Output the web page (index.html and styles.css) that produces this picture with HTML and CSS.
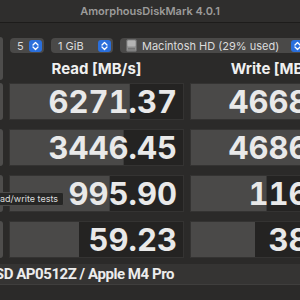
FILE: index.html
```html
<!DOCTYPE html>
<html lang="en">
<head>
    <meta charset="UTF-8">
    <meta name="viewport" content="width=device-width, initial-scale=1.0">
    <title>AmorphousDiskMark</title>
    <link rel="stylesheet" href="styles.css">
</head>
<body>
    <div class="window">
        <div class="titlebar">AmorphousDiskMark 4.0.1</div>

        <div class="content">
            <div class="top">
                <div class="side-btn all"></div>
                <div class="toolbar">
                    <div class="popup popup-count">
                        <span class="popup-label">5</span>
                        <span class="stepper"><svg viewBox="0 0 13 12"><path d="M4 5l2.5-2.5L9 5M4 7l2.5 2.5L9 7" fill="none" stroke="#fff" stroke-width="1.3" stroke-linecap="round" stroke-linejoin="round"/></svg></span>
                    </div>
                    <div class="popup popup-size">
                        <span class="popup-label">1 GiB</span>
                        <span class="stepper"><svg viewBox="0 0 13 12"><path d="M4 5l2.5-2.5L9 5M4 7l2.5 2.5L9 7" fill="none" stroke="#fff" stroke-width="1.3" stroke-linecap="round" stroke-linejoin="round"/></svg></span>
                    </div>
                    <div class="popup popup-disk">
                        <svg class="disk-icon" viewBox="0 0 11 13">
                            <rect x="0.5" y="0.5" width="10" height="12" rx="1.5" fill="#8e8e8e" stroke="#6a6a6a"/>
                            <rect x="1.5" y="1.5" width="8" height="6" rx="1" fill="#b4b4b4"/>
                            <path d="M2 9.5h7M2 11h7" stroke="#6f6f6f" stroke-width="0.8"/>
                        </svg>
                        <span class="popup-label">Macintosh HD (29% used)</span>
                        <span class="stepper"><svg viewBox="0 0 13 12"><path d="M4 5l2.5-2.5L9 5M4 7l2.5 2.5L9 7" fill="none" stroke="#fff" stroke-width="1.3" stroke-linecap="round" stroke-linejoin="round"/></svg></span>
                    </div>
                </div>
                <div class="head">Read [MB/s]</div>
                <div class="head">Write [MB/s]</div>
            </div>

            <div class="rows">
                <div class="side-btn"></div>
                <div class="cell" style="--w: 69%">6271.37</div>
                <div class="cell" style="--w: 67%">4668.52</div>

                <div class="side-btn"></div>
                <div class="cell" style="--w: 65.5%">3446.45</div>
                <div class="cell" style="--w: 67%">4686.18</div>

                <div class="side-btn"></div>
                <div class="cell" style="--w: 57.5%">995.90</div>
                <div class="cell" style="--w: 44%">116.42</div>

                <div class="side-btn"></div>
                <div class="cell" style="--w: 40%">59.23</div>
                <div class="cell" style="--w: 37.4%">38.76</div>
            </div>

            <div class="footer">APPLE SSD AP0512Z / Apple M4 Pro</div>

            <div class="tooltip">Random read/write tests</div>
        </div>
    </div>
</body>
</html>
```

FILE: styles.css
```css
body {
    margin: 0;
    padding: 0;
    width: 300px;
    height: 300px;
    overflow: hidden;
    background-color: #2a2928;
    font-family: Inter, "Liberation Sans", sans-serif;
    color: #e6e6e6;
}

.window {
    width: 300px;
    height: 300px;
    overflow: hidden;
    background-color: #2b2a29;
}

.titlebar {
    height: 22px;
    line-height: 23px;
    text-align: center;
    font-size: 11px;
    font-weight: 600;
    color: #9c9b9a;
    background-color: #2f2e2d;
    border-bottom: 1px solid #1d1c1b;
}

.content {
    position: relative;
    margin-left: -70px;
    width: 440px;
    padding-top: 14px;
}

.top,
.rows {
    display: grid;
    grid-template-columns: 63px 175px 174px;
    column-gap: 6px;
    padding-left: 10px;
}

.top {
    grid-template-rows: 16px 30px;
}

.rows {
    grid-auto-rows: 37px;
    row-gap: 9px;
}

.side-btn {
    background-color: #4e4d4c;
    border-radius: 3px;
}

.side-btn.all {
    grid-row: 1 / 3;
    margin-bottom: 3px;
}

.toolbar {
    grid-column: 2 / 4;
    display: flex;
    gap: 7px;
    padding: 1px 0 0 1px;
}

.popup {
    height: 15px;
    display: flex;
    align-items: center;
    background-color: #4a4948;
    border-radius: 4px;
    font-size: 11px;
    color: #dcdcdc;
    padding-left: 7px;
    padding-right: 2px;
    box-sizing: border-box;
}

.popup-label {
    flex: 1;
    white-space: nowrap;
}

.popup-count {
    width: 34px;
}

.popup-size {
    width: 62px;
}

.popup-disk {
    width: 186px;
    padding-left: 6px;
}

.disk-icon {
    width: 11px;
    height: 13px;
    margin-right: 5px;
}

.stepper {
    width: 13px;
    height: 12px;
    border-radius: 3px;
    background-color: #2a6fdc;
    display: flex;
}

.stepper svg {
    width: 13px;
    height: 12px;
}

.head {
    grid-row: 2;
    align-self: center;
    text-align: center;
    font-size: 15px;
    font-weight: 700;
    color: #f0f0f0;
}

.cell {
    background-color: #242322;
    background-image: linear-gradient(#4a4948, #4a4948);
    background-repeat: no-repeat;
    background-size: var(--w) 100%;
    box-shadow: inset 0 0 0 1px #343332;
    text-align: right;
    padding-right: 7px;
    font-size: 31px;
    font-weight: 700;
    font-variant-numeric: tabular-nums;
    line-height: 38px;
    color: #e9e9e9;
    white-space: nowrap;
}

.footer {
    margin-top: 6px;
    height: 20px;
    line-height: 20px;
    background-color: #353433;
    border-bottom: 1px solid #3f3e3d;
    text-align: right;
    padding-right: 196px;
    font-family: Roboto, Inter, sans-serif;
    font-size: 15px;
    font-weight: 700;
    letter-spacing: -0.45px;
    color: #ececec;
    white-space: nowrap;
}

.tooltip {
    position: absolute;
    top: 169px;
    right: 306px;
    padding: 0 5px;
    height: 12px;
    line-height: 12px;
    font-size: 9px;
    color: #dcdcdc;
    background-color: #262625;
    border: 1px solid #4c4b4a;
    border-radius: 2px;
    white-space: nowrap;
}
```
